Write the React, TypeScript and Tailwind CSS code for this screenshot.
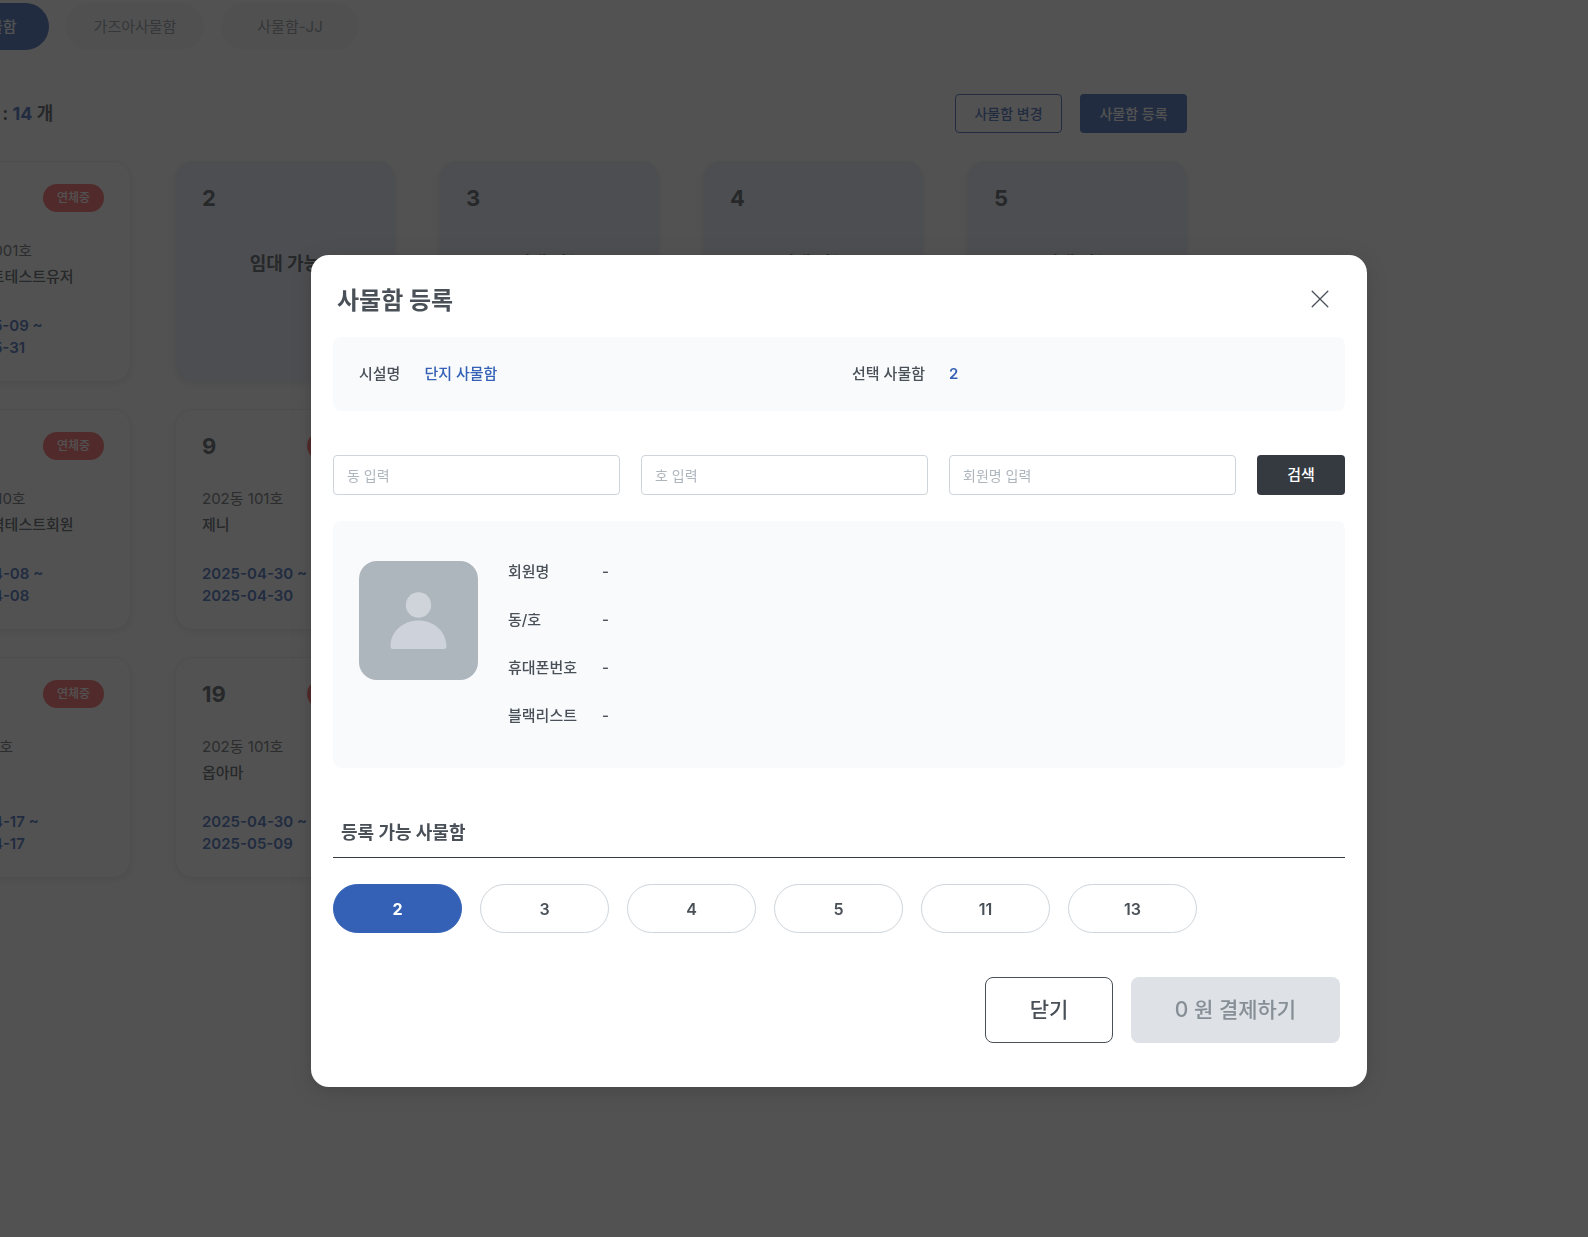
import React, { useState } from 'react';

interface Locker {
  no: number;
  unit?: string;
  member?: string;
  from?: string;
  to?: string;
}

const tabs = ['단지 사물함', '가즈아사물함', '사물함-JJ'];

const lockers: Locker[] = [
  { no: 1, unit: '1001동 1001호', member: 'MQ테스트테스트유저', from: '2025-05-09', to: '2025-05-31' },
  { no: 2 },
  { no: 3 },
  { no: 4 },
  { no: 5 },
  { no: 8, unit: '102동 1010호', member: 'MQ출입력테스트회원', from: '2025-04-08', to: '2025-04-08' },
  { no: 9, unit: '202동 101호', member: '제니', from: '2025-04-30', to: '2025-04-30' },
  { no: 18, unit: '101동 101호', member: '제니', from: '2025-04-17', to: '2025-04-17' },
  { no: 19, unit: '202동 101호', member: '옵아마', from: '2025-04-30', to: '2025-05-09' },
];

const rows = [lockers.slice(0, 5), lockers.slice(5, 7), lockers.slice(7, 9)];

const available = [2, 3, 4, 5, 11, 13];

const memberFields = ['회원명', '동/호', '휴대폰번호', '블랙리스트'];

const LockerCard: React.FC<{ locker: Locker }> = ({ locker }) => {
  const rented = Boolean(locker.member);

  return (
    <article
      className={`flex h-[221px] flex-col rounded-[18px] border border-[#e9ecef] px-[26px] pt-[22px] shadow-[0_2px_8px_rgba(0,0,0,0.1)] ${
        rented ? 'bg-white' : 'bg-[#ebeefb]'
      }`}
    >
      <div className="flex h-7 items-center justify-between">
        <h3 className="text-[22px] font-bold">{locker.no}</h3>
        {rented && (
          <span className="flex h-7 w-[61px] items-center justify-center rounded-full bg-[#f95c5c] text-xs font-medium text-white">
            연체중
          </span>
        )}
      </div>
      {rented ? (
        <>
          <p className="mt-[26px] text-[15px] leading-[26px] text-[#5c636a]">{locker.unit}</p>
          <p className="text-[15px] leading-[26px] font-medium whitespace-nowrap">{locker.member}</p>
          <p className="mt-[25px] text-[15px] leading-[22px] font-semibold text-[#3461b5]">
            {locker.from} ~<br />
            {locker.to}
          </p>
        </>
      ) : (
        <p className="mt-[38px] text-center text-lg leading-7 font-bold">임대 가능</p>
      )}
    </article>
  );
};

const LockerPage: React.FC = () => (
  <main className="mr-[401px] -ml-[89px] pt-[3px]">
    <nav className="flex gap-[17px]">
      {tabs.map((tab, i) => (
        <button
          key={tab}
          className={`h-[47px] w-[138px] rounded-full pt-0.5 text-[15px] ${
            i === 0 ? 'bg-[#3461b5] font-medium text-white' : 'bg-[#f4f5f6] text-[#868e96]'
          }`}
        >
          {tab}
        </button>
      ))}
    </nav>

    <div className="mt-11 flex items-center justify-between">
      <h2 className="text-lg font-bold">
        전체 사물함 : <span className="text-[#3461b5]">14</span> 개
      </h2>
      <div className="flex gap-[18px]">
        <button className="h-[39px] w-[107px] rounded border border-[#3461b5] text-sm font-medium text-[#3461b5]">
          사물함 변경
        </button>
        <button className="h-[39px] w-[107px] rounded bg-[#3461b5] text-sm font-medium text-white">사물함 등록</button>
      </div>
    </div>

    <div className="mt-7 flex flex-col gap-[27px]">
      {rows.map((row) => (
        <div key={row[0].no} className="grid grid-cols-5 gap-x-11">
          {row.map((locker) => (
            <LockerCard key={locker.no} locker={locker} />
          ))}
        </div>
      ))}
    </div>
  </main>
);

const SearchInput: React.FC<{ label: string }> = ({ label }) => (
  <input
    type="text"
    aria-label={label}
    placeholder={label}
    className="h-10 min-w-0 flex-1 rounded border border-[#ced4da] px-[13px] text-sm placeholder:text-[#adb5bd] focus:outline-none"
  />
);

const RegisterModal: React.FC = () => {
  const [selected, setSelected] = useState<number>(2);

  return (
    <section
      role="dialog"
      aria-labelledby="register-title"
      className="w-full max-w-[1056px] rounded-[18px] bg-white px-[22px] pt-[22px] pb-11 shadow-[0_4px_22px_rgba(0,0,0,0.15)]"
    >
      <header className="flex h-[60px] items-start justify-between pr-[13px] pl-1">
        <h1 id="register-title" className="text-2xl leading-[48px] font-bold">
          사물함 등록
        </h1>
        <button aria-label="닫기" className="flex h-11 w-6 items-center justify-center">
          <svg width="18" height="18" viewBox="0 0 18 18" fill="none" stroke="#495057" strokeWidth="1.3" strokeLinecap="round">
            <path d="M1.2 1.2l15.6 15.6M16.8 1.2L1.2 16.8" />
          </svg>
        </button>
      </header>

      <dl className="grid h-[74px] grid-cols-2 items-center gap-[26px] rounded-lg bg-[#f8fafc] px-[26px] text-[15px] font-medium">
        <div className="flex items-center gap-6">
          <dt>시설명</dt>
          <dd className="text-[#3461b5]">단지 사물함</dd>
        </div>
        <div className="flex items-center gap-6">
          <dt>선택 사물함</dt>
          <dd className="font-semibold text-[#3461b5]">{selected}</dd>
        </div>
      </dl>

      {/* Member search */}
      <form className="mt-11 flex gap-[21px]" onSubmit={(e) => e.preventDefault()}>
        <SearchInput label="동 입력" />
        <SearchInput label="호 입력" />
        <SearchInput label="회원명 입력" />
        <button className="h-10 w-[88px] rounded bg-[#343a40] text-[15px] font-medium text-white">검색</button>
      </form>

      <div className="mt-[26px] flex gap-[30px] rounded-lg bg-[#f8fafc] px-[26px] pt-10 pb-[41px]">
        <svg className="size-[119px] shrink-0" viewBox="0 0 119 119">
          <rect width="119" height="119" rx="18" fill="#adb5bd" />
          <circle cx="59.5" cy="44" r="12.7" fill="#ced4da" />
          <path
            d="M31.5 84.500C32 70 44.500 59.500 59.500 59.500S87 70 87.500 84.500Q87.700 88 85 88H34Q31.300 88 31.500 84.500Z"
            fill="#cdd2db"
          />
        </svg>
        <dl className="flex flex-col gap-[26px] text-[15px] leading-[22px] font-medium">
          {memberFields.map((field) => (
            <div key={field} className="flex">
              <dt className="w-[94px]">{field}</dt>
              <dd>-</dd>
            </div>
          ))}
        </dl>
      </div>

      {/* Available lockers */}
      <h2 className="mt-[51px] border-b border-[#343a40] px-2 pb-2.5 text-lg leading-7 font-bold">등록 가능 사물함</h2>
      <div className="mt-[26px] flex flex-wrap gap-[18px]">
        {available.map((no) => (
          <button
            key={no}
            onClick={() => setSelected(no)}
            className={`h-[49px] w-[129px] rounded-full border text-base ${
              no === selected
                ? 'border-[#3461b5] bg-[#3461b5] font-bold text-white'
                : 'border-[#ced4da] bg-white font-semibold'
            }`}
          >
            {no}
          </button>
        ))}
      </div>

      <footer className="mt-11 flex justify-end gap-[18px] pr-[5px]">
        <button className="h-[66px] w-32 rounded-lg border border-[#495057] text-[21px] font-medium">닫기</button>
        <button disabled className="h-[66px] w-[209px] rounded-lg bg-[#dee2e6] text-[21px] font-medium text-[#868e96]">
          0 원 결제하기
        </button>
      </footer>
    </section>
  );
};

const App: React.FC = () => (
  <div className="min-h-screen overflow-hidden bg-white font-['Inter','Noto_Sans_CJK_KR',sans-serif] text-[#495057]">
    <LockerPage />
    <div className="fixed inset-0 flex items-start justify-center bg-[#1c1c1c]/76 pt-[255px] pl-[90px]">
      <RegisterModal />
    </div>
  </div>
);

export default App;
